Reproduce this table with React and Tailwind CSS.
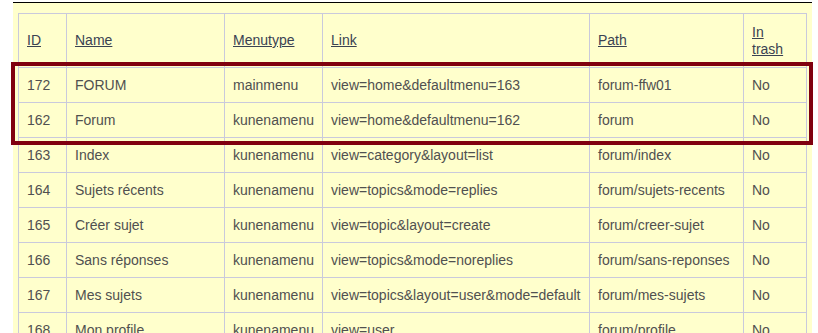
const columns = [
  { key: 'id', label: 'ID', width: 'w-[48px]' },
  { key: 'name', label: 'Name', width: 'w-[158px]' },
  { key: 'menutype', label: 'Menutype', width: 'w-[98px]' },
  { key: 'link', label: 'Link', width: 'w-[267px]' },
  { key: 'path', label: 'Path', width: 'w-[154px]' },
  { key: 'trash', label: 'In trash', width: 'w-[63px]' },
];

const rows = [
  [172, 'FORUM', 'mainmenu', 'view=home&defaultmenu=163', 'forum-ffw01', 'No'],
  [162, 'Forum', 'kunenamenu', 'view=home&defaultmenu=162', 'forum', 'No'],
  [163, 'Index', 'kunenamenu', 'view=category&layout=list', 'forum/index', 'No'],
  [164, 'Sujets récents', 'kunenamenu', 'view=topics&mode=replies', 'forum/sujets-recents', 'No'],
  [165, 'Créer sujet', 'kunenamenu', 'view=topic&layout=create', 'forum/creer-sujet', 'No'],
  [166, 'Sans réponses', 'kunenamenu', 'view=topics&mode=noreplies', 'forum/sans-reponses', 'No'],
  [167, 'Mes sujets', 'kunenamenu', 'view=topics&layout=user&mode=default', 'forum/mes-sujets', 'No'],
  [168, 'Mon profile', 'kunenamenu', 'view=user', 'forum/profile', 'No'],
];

export default function App() {
  return (
    <div className="relative h-[333px] overflow-hidden bg-white font-['Liberation_Sans',Arial,sans-serif] text-[14px]">
      {/* yellow panel */}
      <div className="mt-[2px] ml-[13px] w-[799px] h-[400px] border-t border-black bg-[#ffffcc] pt-[10px] pl-[5px]">
        <table className="w-[789px] table-fixed border-collapse">
          <thead>
            <tr>
              {columns.map((c) => (
                <th
                  key={c.key}
                  className={`${c.width} h-[54px] border border-[#c9c9dc] px-2 py-2 text-left align-middle font-normal leading-[17px]`}
                >
                  <a href="#" className="text-[#3a4252] underline">
                    {c.key === 'trash' ? (
                      <>
                        In
                        <br />
                        trash
                      </>
                    ) : (
                      c.label
                    )}
                  </a>
                </th>
              ))}
            </tr>
          </thead>
          <tbody>
            {rows.map((r) => (
              <tr key={r[0]}>
                {r.map((cell, i) => (
                  <td
                    key={i}
                    className="h-[35px] border border-[#c9c9dc] px-2 py-0 align-middle leading-[18px] whitespace-nowrap text-[#505050]"
                  >
                    {cell}
                  </td>
                ))}
              </tr>
            ))}
          </tbody>
        </table>
      </div>

      {/* highlight box */}
      <div className="absolute left-[11px] top-[62px] w-[802px] h-[83px] border-4 border-[#80000f]" />
    </div>
  );
}
